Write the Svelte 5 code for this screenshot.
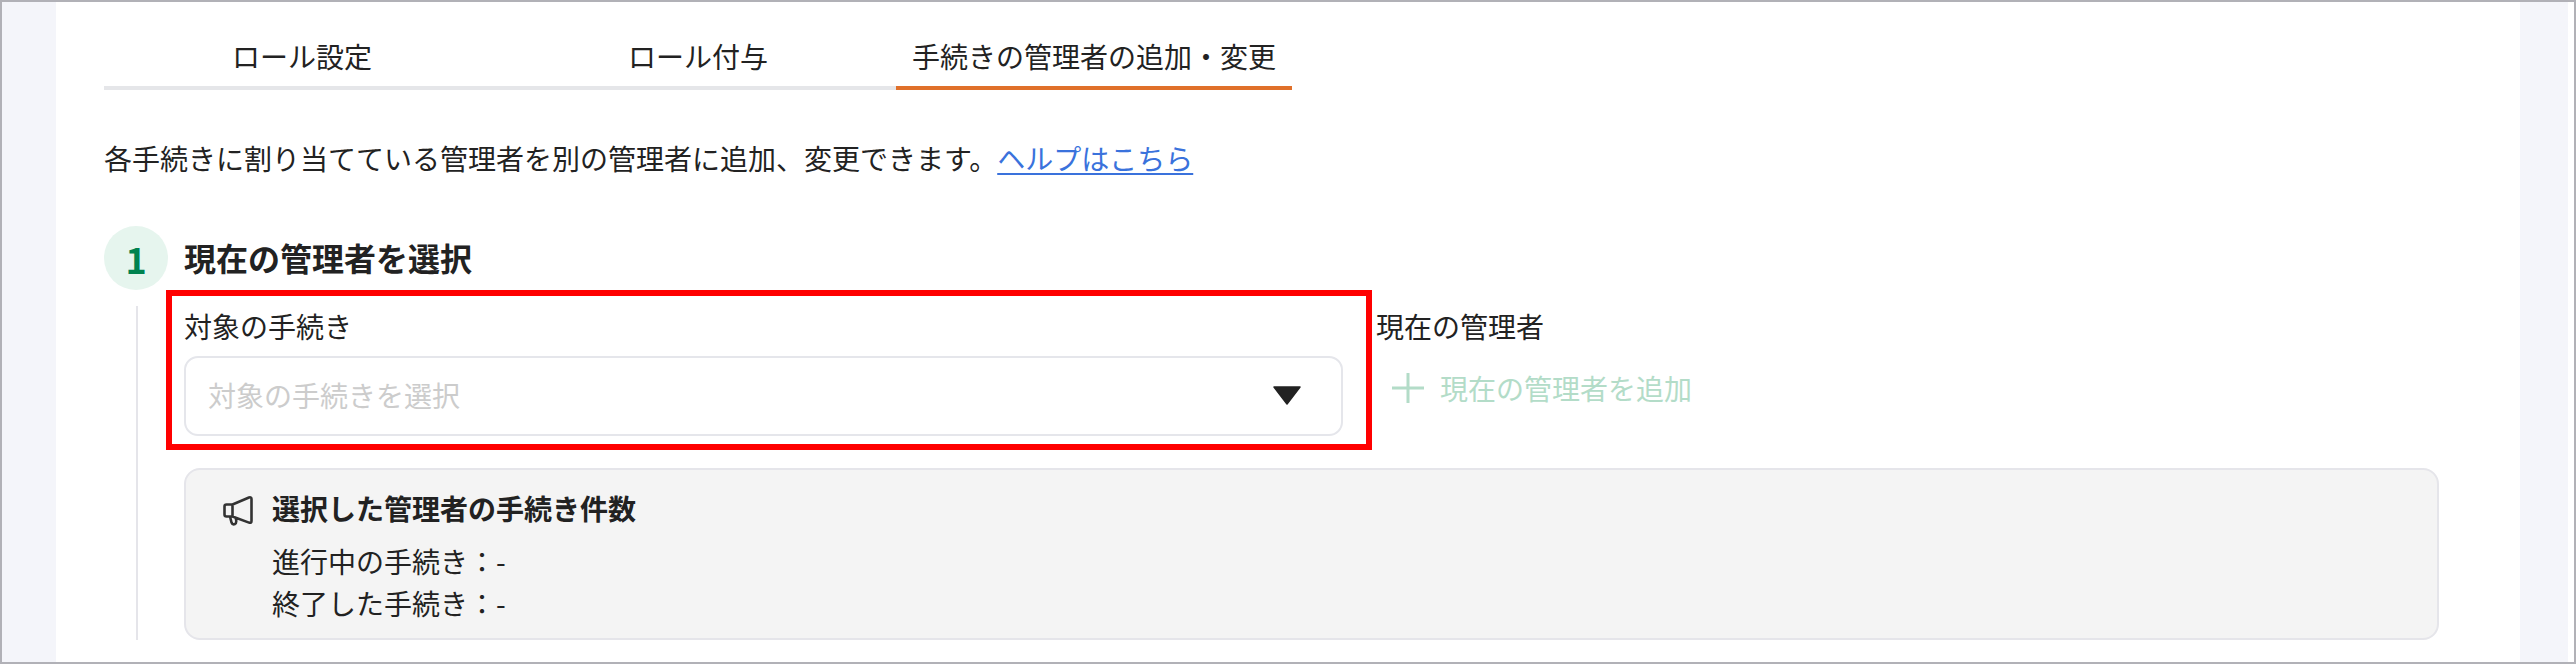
<script lang="ts">
  const tabs = ['ロール設定', 'ロール付与', '手続きの管理者の追加・変更'];
  let activeTab = $state(2);

  const counts = [
    { label: '進行中の手続き', value: '-' },
    { label: '終了した手続き', value: '-' }
  ];
</script>

<div class="frame">
  <div class="page">
    <main class="panel">
      <div class="tabs">
        {#each tabs as tab, i}
          <button type="button" class="tab" class:active={activeTab === i} onclick={() => (activeTab = i)}>
            {tab}
          </button>
        {/each}
      </div>

      <p class="desc">
        各手続きに割り当てている管理者を別の管理者に追加、変更できます。<a href="#help" class="help">ヘルプはこちら</a>
      </p>

      <section>
        <div class="step-head">
          <span class="step-num">1</span>
          <h2>現在の管理者を選択</h2>
        </div>

        <div class="step-body">
          <div class="form-row">
            <div class="field">
              <div class="label">対象の手続き</div>
              <div class="select">
                <span class="placeholder">対象の手続きを選択</span>
                <svg class="caret" width="28" height="19" viewBox="0 0 28 19">
                  <path d="M1 1 H27 L14 18 Z" fill="#222" stroke="#222" stroke-width="1.5" stroke-linejoin="round" />
                </svg>
              </div>
              <div class="highlight"></div>
            </div>

            <div class="current">
              <div class="label">現在の管理者</div>
              <div class="add">
                <svg width="32" height="32" viewBox="0 0 32 32">
                  <path d="M16 1 V31 M0 16 H32" stroke="#b3dcc8" stroke-width="3" fill="none" />
                </svg>
                <span>現在の管理者を追加</span>
              </div>
            </div>
          </div>

          <div class="info">
            <div class="info-head">
              <svg width="30" height="31" viewBox="0 0 30 31">
                <path
                  d="M9.5 9.5 L26 2.5 Q28.5 1.8 28.5 4 V26 Q28.5 28.4 26 27.6 L9.5 21.5 H3.5 Q1.5 21.5 1.5 19.5 V11.5 Q1.5 9.5 3.5 9.5 Z M9.5 9.5 V21.5 M7 21.5 L8.5 27.5 Q9.5 30 12 29 Q14 27.8 12.8 23.5"
                  fill="none"
                  stroke="#333"
                  stroke-width="2.6"
                  stroke-linejoin="round"
                />
              </svg>
              <strong>選択した管理者の手続き件数</strong>
            </div>
            {#each counts as row}
              <div class="count">{row.label}：{row.value}</div>
            {/each}
          </div>
        </div>
      </section>
    </main>
  </div>
</div>

<style>
  :global(body) {
    margin: 0;
    background: #fff;
  }

  .frame {
    box-sizing: border-box;
    width: 2576px;
    height: 664px;
    border: 2px solid #b1b1b7;
    padding-right: 6px;
    overflow: hidden;
    background: #fff;
    color: #222;
    font-family: 'Noto Sans CJK JP', 'Noto Sans', sans-serif;
    font-size: 28px;
    line-height: 42px;
  }

  .page {
    height: 100%;
    padding: 0 48px 0 54px;
    background: #f4f5fa;
  }

  .panel {
    height: 100%;
    padding: 0 81px 0 48px;
    background: #fff;
    overflow: hidden;
  }

  .tabs {
    display: flex;
    width: 1188px;
    height: 88px;
  }

  .tab {
    flex: 0 0 396px;
    box-sizing: border-box;
    height: 88px;
    padding: 33px 0 9px;
    border: 0;
    border-bottom: 4px solid #e5e6e9;
    background: none;
    color: #222;
    font: inherit;
    cursor: pointer;
  }

  .tab.active {
    border-bottom-color: #e0702a;
  }

  .desc {
    margin: 47px 0 2px;
  }

  .help {
    color: #3a72dc;
    text-decoration: underline;
    text-underline-offset: 3px;
  }

  .step-head {
    display: flex;
    align-items: center;
    gap: 16px;
    margin-top: 47px;
  }

  .step-num {
    display: flex;
    align-items: center;
    justify-content: center;
    width: 64px;
    height: 64px;
    border-radius: 50%;
    background: #e6f5ee;
    color: #00824f;
    font-size: 36px;
    font-weight: 700;
  }

  h2 {
    margin: 0;
    padding-bottom: 3px;
    font-size: 32px;
    line-height: 48px;
    font-weight: 700;
  }

  .step-body {
    margin: 16px 0 0 32px;
    padding-left: 46px;
    border-left: 2px solid #e5e5ea;
  }

  .form-row {
    display: flex;
    gap: 33px;
  }

  .field {
    position: relative;
    width: 1159px;
  }

  .label {
    margin-top: -1px;
  }

  .select {
    display: flex;
    align-items: center;
    justify-content: space-between;
    box-sizing: border-box;
    height: 80px;
    margin-top: 9px;
    padding: 0 40px 0 22px;
    border: 2px solid #e5e6eb;
    border-radius: 14px;
    background: #fff;
  }

  .placeholder {
    padding-bottom: 3px;
    color: #ccc;
  }

  .caret {
    margin-bottom: 1px;
  }

  .highlight {
    position: absolute;
    top: -16px;
    left: -18px;
    right: -29px;
    bottom: -14px;
    border: 6px solid #f00;
    pointer-events: none;
  }

  .add {
    display: flex;
    align-items: center;
    gap: 16px;
    margin-top: 20px;
    padding-left: 16px;
    color: #b3dcc8;
  }

  .info {
    box-sizing: border-box;
    height: 172px;
    margin-top: 32px;
    padding: 17px 37px 12px;
    border: 2px solid #e5e5ea;
    border-radius: 16px;
    background: #f4f4f4;
  }

  .info-head {
    display: flex;
    align-items: center;
    gap: 19px;
    margin-bottom: 11px;
  }

  .info-head svg {
    margin-top: 4px;
  }

  .count {
    padding-left: 49px;
  }
</style>
